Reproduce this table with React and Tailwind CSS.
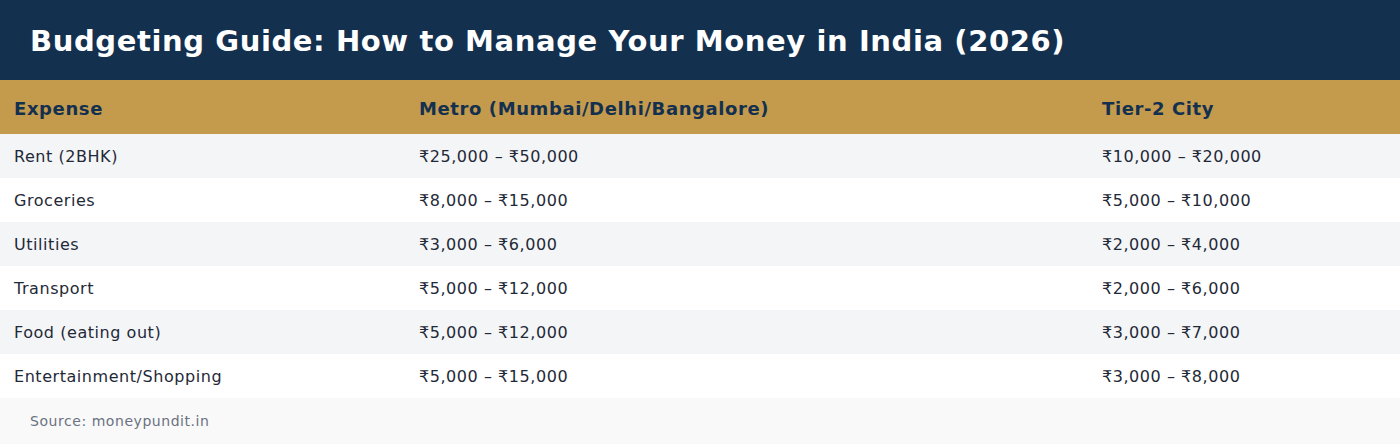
const rows = [
  ['Rent (2BHK)', '₹25,000 – ₹50,000', '₹10,000 – ₹20,000'],
  ['Groceries', '₹8,000 – ₹15,000', '₹5,000 – ₹10,000'],
  ['Utilities', '₹3,000 – ₹6,000', '₹2,000 – ₹4,000'],
  ['Transport', '₹5,000 – ₹12,000', '₹2,000 – ₹6,000'],
  ['Food (eating out)', '₹5,000 – ₹12,000', '₹3,000 – ₹7,000'],
  ['Entertainment/Shopping', '₹5,000 – ₹15,000', '₹3,000 – ₹8,000'],
];

const App = () => {
  return (
    <div className="w-[1400px] bg-white font-['DejaVu_Sans',sans-serif]">
      <div className="h-20 bg-[#14304f] px-[30px] flex items-center">
        <h1 className="text-[29px] leading-9 tracking-[0.6px] font-bold text-white pt-0.5">
          Budgeting Guide: How to Manage Your Money in India (2026)
        </h1>
      </div>
      <div className="grid grid-cols-[405px_683px_1fr] h-[54px] items-center bg-[#c49a4c] text-lg tracking-[0.6px] font-bold text-[#14304f]">
        <div className="px-[14px] pt-1">Expense</div>
        <div className="px-[14px] pt-1">Metro (Mumbai/Delhi/Bangalore)</div>
        <div className="px-[14px] pt-1">Tier-2 City</div>
      </div>
      {rows.map((r, i) => (
        <div
          key={r[0]}
          className={`grid grid-cols-[405px_683px_1fr] h-11 items-center text-base tracking-[0.55px] text-[#1f2937] ${i % 2 === 0 ? 'bg-[#f4f5f7]' : 'bg-white'}`}
        >
          <div className="px-[14px] pt-0.5">{r[0]}</div>
          <div className="px-[14px] pt-0.5">{r[1]}</div>
          <div className="px-[14px] pt-0.5">{r[2]}</div>
        </div>
      ))}
      <div className="h-[46px] bg-[#f9f9fa] px-[30px] flex items-center text-sm tracking-[0.55px] text-[#6b7280]">
        Source: moneypundit.in
      </div>
    </div>
  );
};

export default App;
